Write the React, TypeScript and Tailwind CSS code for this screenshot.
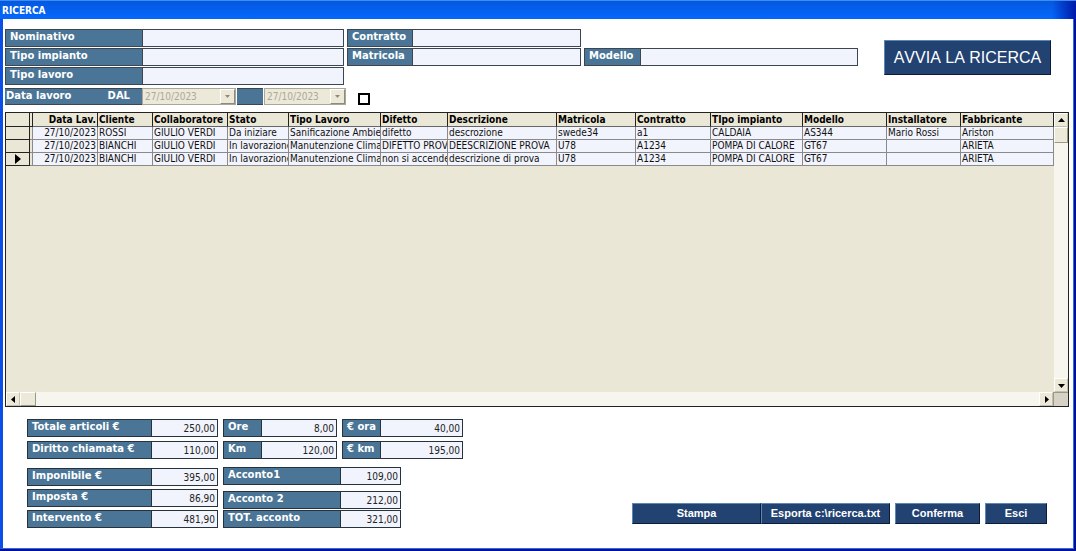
import { useState } from "react";
import clsx from "clsx";

type Field = { id: string; label: string; width: string; labelWidth: string };

const searchRows: Field[][] = [
  [
    { id: "nominativo", label: "Nominativo", width: "w-[339px]", labelWidth: "w-[137px]" },
    { id: "contratto", label: "Contratto", width: "w-[234px]", labelWidth: "w-[65px]" },
  ],
  [
    { id: "tipo-impianto", label: "Tipo impianto", width: "w-[339px]", labelWidth: "w-[137px]" },
    { id: "matricola", label: "Matricola", width: "w-[234px]", labelWidth: "w-[65px]" },
    { id: "modello", label: "Modello", width: "w-[274px]", labelWidth: "w-[56px]" },
  ],
  [{ id: "tipo-lavoro", label: "Tipo lavoro", width: "w-[339px]", labelWidth: "w-[137px]" }],
];

const columns = [
  { title: "Data Lav.", width: "w-[65px]", right: true },
  { title: "Cliente", width: "w-[55px]" },
  { title: "Collaboratore", width: "w-[75px]" },
  { title: "Stato", width: "w-[61px]" },
  { title: "Tipo Lavoro", width: "w-[92px]" },
  { title: "Difetto", width: "w-[67px]" },
  { title: "Descrizione", width: "w-[109px]" },
  { title: "Matricola", width: "w-[79px]" },
  { title: "Contratto", width: "w-[75px]" },
  { title: "TIpo impianto", width: "w-[92px]" },
  { title: "Modello", width: "w-[84px]" },
  { title: "Installatore", width: "w-[74px]" },
  { title: "Fabbricante", width: "w-[93px]" },
];

const rows = [
  ["27/10/2023", "ROSSI", "GIULIO VERDI", "Da iniziare", "Sanificazione Ambier", "difetto", "descrozione", "swede34", "a1", "CALDAIA", "AS344", "Mario Rossi", "Ariston"],
  ["27/10/2023", "BIANCHI", "GIULIO VERDI", "In lavorazione", "Manutenzione Climat", "DIFETTO PROV", "DEESCRIZIONE PROVA", "U78", "A1234", "POMPA DI CALORE", "GT67", "", "ARIETA"],
  ["27/10/2023", "BIANCHI", "GIULIO VERDI", "In lavorazione", "Manutenzione Climat", "non si accende", "descrizione di prova", "U78", "A1234", "POMPA DI CALORE", "GT67", "", "ARIETA"],
];

const labelText = "font-['DejaVu_Sans',sans-serif] text-[10px] leading-[14px] font-bold text-white";
const cellText = "font-['DejaVu_Sans_Condensed','DejaVu_Sans',sans-serif] text-[10px]";

function Arrow({ dir }: { dir: "up" | "down" | "left" | "right" }) {
  const points = {
    up: "0,5 7,5 3.5,1",
    down: "0,2 7,2 3.5,6",
    left: "5,0 5,7 1,3.5",
    right: "2,0 2,7 6,3.5",
  };
  return (
    <svg viewBox="0 0 7 7" className="h-[7px] w-[7px] fill-current">
      <polygon points={points[dir]} />
    </svg>
  );
}

function SearchField({ id, label, width, labelWidth }: Field) {
  return (
    <div className={clsx("flex h-[18px] border border-[#3c4650] bg-[#f1f4fc]", width)}>
      <label htmlFor={id} className={clsx("shrink-0 border-r border-[#3c4650] bg-[#4a7596] pl-1", labelText, labelWidth)}>
        {label}
      </label>
      <input id={id} type="text" className={clsx("min-w-0 flex-1 px-1 outline-none", cellText)} />
    </div>
  );
}

function DateSelect({ label, width }: { label: string; width: string }) {
  return (
    <div className={clsx("relative flex h-[17px]", width)}>
      <select
        disabled
        aria-label={label}
        className={clsx("w-full appearance-none border border-[#aca899] bg-[#ece9d8] pl-0.5 text-[#aca899] opacity-100", cellText)}
      >
        <option>27/10/2023</option>
      </select>
      <span className="pointer-events-none absolute top-px right-px flex h-[15px] w-[15px] items-center justify-center border border-t-white border-r-[#8f8b7c] border-b-[#8f8b7c] border-l-white bg-[#ece9d8] text-[#8f8b7c]">
        <svg viewBox="0 0 5 3" className="h-[3px] w-[5px] fill-current">
          <polygon points="0,0 5,0 2.5,3" />
        </svg>
      </span>
    </div>
  );
}

function Total({ id, label, value, width, labelWidth }: Field & { value: string }) {
  return (
    <div className={clsx("flex h-[18px] border border-[#26323c] bg-[#f1f4fc]", width)}>
      <label htmlFor={id} className={clsx("shrink-0 border-r border-[#26323c] bg-[#4a7596] pl-1", labelText, labelWidth)}>
        {label}
      </label>
      <input
        id={id}
        readOnly
        value={value}
        className={clsx("min-w-0 flex-1 pr-0.5 text-right text-[#222] outline-none", cellText)}
      />
    </div>
  );
}

function ActionButton({ children, className }: { children: string; className: string }) {
  return (
    <button
      type="button"
      className={clsx(
        "border border-t-[#5a86b8] border-r-[#0c1c38] border-b-[#0c1c38] border-l-[#5a86b8] bg-[#224272] font-['Liberation_Sans',sans-serif] whitespace-nowrap text-white",
        className,
      )}
    >
      {children}
    </button>
  );
}

const scrollButton =
  "flex h-[14px] w-[14px] shrink-0 items-center justify-center border border-t-white border-r-[#c4c0b0] border-b-[#c4c0b0] border-l-white bg-[#ece9d8] text-black";
const scrollThumb = "border border-t-white border-r-[#9c9888] border-b-[#9c9888] border-l-white bg-[#ece9d8]";

function ResultsGrid() {
  const [selected, setSelected] = useState(2);

  return (
    <section className="mr-1 ml-[2px] flex flex-1 flex-col border border-[#222] bg-[#ebe7d6]">
      <div className="flex flex-1">
        <div className="min-w-0 flex-1 overflow-hidden">
          <table className={clsx("w-full table-fixed border-separate border-spacing-0 whitespace-nowrap text-[#111]", cellText)}>
            <colgroup>
              <col className="w-[24px]" />
              <col className="w-[3px]" />
              {columns.map((c) => (
                <col key={c.title} className={c.width} />
              ))}
            </colgroup>
            <thead>
              <tr className="h-[14px]">
                <th aria-label="Selezione" className="border-r border-b border-[#222] p-0" />
                <th aria-hidden="true" className="border-r border-b border-[#222] p-0" />
                {columns.map((c) => (
                  <th
                    key={c.title}
                    scope="col"
                    className={clsx(
                      "overflow-hidden border-r border-b border-r-[#222] border-b-[#666] p-0 pl-px leading-[12px] font-bold text-black",
                      c.right ? "pr-px text-right" : "text-left",
                    )}
                  >
                    {c.title}
                  </th>
                ))}
              </tr>
            </thead>
            <tbody>
              {rows.map((row, i) => (
                <tr key={i} onClick={() => setSelected(i)} className="h-[13px]">
                  <td className="border-r border-b border-[#222] p-0">
                    {i === selected && (
                      <svg viewBox="0 0 6 10" className="mx-auto h-[10px] w-[6px] fill-black">
                        <polygon points="0,0 6,5 0,10" />
                      </svg>
                    )}
                  </td>
                  <td className="border-r border-b border-[#8a8a8a] p-0" />
                  {row.map((value, j) => (
                    <td
                      key={j}
                      className={clsx(
                        "overflow-hidden border-r border-b border-[#8a8a8a] bg-[#f1f4fc] p-0 pl-px leading-[12px]",
                        j === 0 && "pr-px text-right",
                      )}
                    >
                      {value}
                    </td>
                  ))}
                </tr>
              ))}
            </tbody>
          </table>
        </div>
        <div className="flex w-[14px] flex-col bg-[#f6f5ee]">
          <button type="button" aria-label="Scorri su" className={scrollButton}>
            <Arrow dir="up" />
          </button>
          <div className={clsx("h-[16px]", scrollThumb)} />
          <button type="button" aria-label="Scorri giù" className={clsx("mt-auto", scrollButton)}>
            <Arrow dir="down" />
          </button>
        </div>
      </div>
      <div className="flex h-[14px] bg-[#f6f5ee]">
        <button type="button" aria-label="Scorri a sinistra" className={scrollButton}>
          <Arrow dir="left" />
        </button>
        <div className={clsx("w-[16px]", scrollThumb)} />
        <button type="button" aria-label="Scorri a destra" className={clsx("ml-auto", scrollButton)}>
          <Arrow dir="right" />
        </button>
        <div className="w-[15px] border-t border-l border-[#9c9888] bg-[#d6d2c6]" />
      </div>
    </section>
  );
}

export default function App() {
  const [useDates, setUseDates] = useState(false);

  return (
    <div className="flex min-h-screen flex-col border-r-2 border-b-2 border-r-[#00109a] border-b-[#00109a] bg-white">
      <header className="-mr-[2px] flex h-[19px] border-t border-[#3f8cf3] bg-linear-to-b from-[#0558e0] to-[#0468fb] pl-[2px]">
        <h1 className="font-['DejaVu_Sans_Condensed','DejaVu_Sans',sans-serif] text-[10px] leading-[19px] font-bold text-white">
          RICERCA
        </h1>
        <div className="ml-auto w-6 bg-linear-to-r from-transparent to-[#0018a8]" />
      </header>

      <main className="flex flex-1 flex-col border-r border-b border-l-[3px] border-r-[#2f6ae8] border-b-[#2f6ae8] border-l-[#0b50e6]">
        <form className="flex items-start justify-between pt-[10px] pr-[22px] pb-[7px] pl-[2px]">
          <div className="flex flex-col gap-px">
            {searchRows.map((fields) => (
              <div key={fields[0].id} className="flex gap-[3px]">
                {fields.map((f) => (
                  <SearchField key={f.id} {...f} />
                ))}
              </div>
            ))}
            <div className="flex items-start pt-[2px]">
              <div className={clsx("flex h-[17px] w-[137px] justify-between border-y border-[#3c4650] bg-[#4a7596] pr-3 pl-px", labelText)}>
                <span>Data lavoro</span>
                <span>DAL</span>
              </div>
              <DateSelect label="Dal" width="w-[94px]" />
              <div className="mx-px h-[17px] w-[26px] border-y border-[#3c4650] bg-[#4a7596]" />
              <DateSelect label="Al" width="w-[82px]" />
              <input
                type="checkbox"
                aria-label="Filtra per data"
                checked={useDates}
                onChange={(e) => setUseDates(e.target.checked)}
                className="mt-[5px] ml-3 h-3 w-3 appearance-none border-2 border-black bg-white checked:bg-black"
              />
            </div>
          </div>
          <ActionButton className="mt-[11px] h-[35px] w-[167px] text-[16px] [font-kerning:none]">AVVIA LA RICERCA</ActionButton>
        </form>

        <ResultsGrid />

        <footer className="flex items-end justify-between pt-3 pr-[26px] pb-5 pl-6">
          <div className="flex gap-[5px]">
            <div className="flex flex-col gap-[4px]">
              <Total id="articoli" label="Totale articoli €" value="250,00" width="w-[191px]" labelWidth="w-[124px]" />
              <Total id="diritto" label="Diritto chiamata €" value="110,00" width="w-[191px]" labelWidth="w-[124px]" />
              <div className="mt-[5px] flex flex-col gap-[3px]">
                <Total id="imponibile" label="Imponibile €" value="395,00" width="w-[191px]" labelWidth="w-[124px]" />
                <Total id="imposta" label="Imposta €" value="86,90" width="w-[191px]" labelWidth="w-[124px]" />
                <Total id="intervento" label="Intervento €" value="481,90" width="w-[191px]" labelWidth="w-[124px]" />
              </div>
            </div>
            <div className="flex flex-col justify-between">
              <div className="flex gap-[5px]">
                <div className="flex flex-col gap-[4px]">
                  <Total id="ore" label="Ore" value="8,00" width="w-[114px]" labelWidth="w-[38px]" />
                  <Total id="km" label="Km" value="120,00" width="w-[114px]" labelWidth="w-[38px]" />
                </div>
                <div className="flex flex-col gap-[4px]">
                  <Total id="euro-ora" label="€ ora" value="40,00" width="w-[121px]" labelWidth="w-[38px]" />
                  <Total id="euro-km" label="€ km" value="195,00" width="w-[121px]" labelWidth="w-[38px]" />
                </div>
              </div>
              <div className="flex flex-col gap-[6px]">
                <Total id="acconto1" label="Acconto1" value="109,00" width="w-[178px]" labelWidth="w-[117px]" />
                <div className="flex flex-col gap-px">
                  <Total id="acconto2" label="Acconto 2" value="212,00" width="w-[178px]" labelWidth="w-[117px]" />
                  <Total id="tot-acconto" label="TOT. acconto" value="321,00" width="w-[178px]" labelWidth="w-[117px]" />
                </div>
              </div>
            </div>
          </div>
          <div className="flex gap-[5px] pb-1 text-[11px] font-bold">
            <div className="flex">
              <ActionButton className="h-[21px] w-[129px]">Stampa</ActionButton>
              <ActionButton className="h-[21px] w-[129px]">Esporta c:\ricerca.txt</ActionButton>
            </div>
            <ActionButton className="h-[21px] w-[85px]">Conferma</ActionButton>
            <ActionButton className="h-[21px] w-[62px]">Esci</ActionButton>
          </div>
        </footer>
      </main>
    </div>
  );
}
